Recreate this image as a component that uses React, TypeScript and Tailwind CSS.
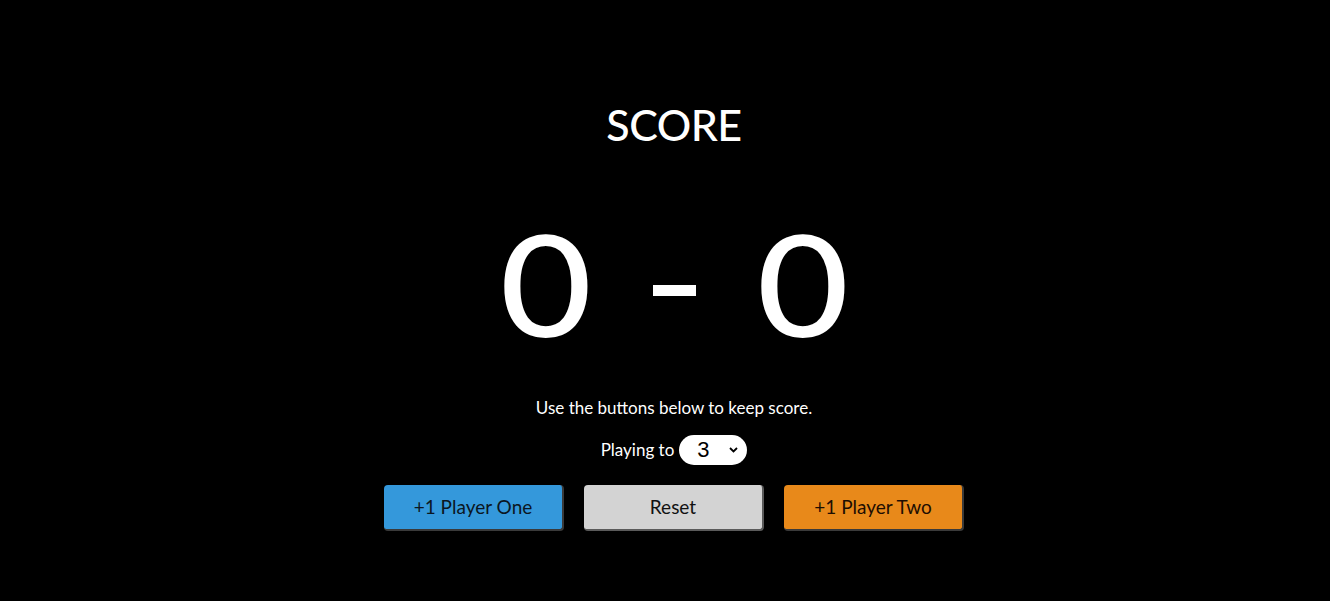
import { useState } from 'react';

export default function App() {
  const [p1, setP1] = useState(0);
  const [p2, setP2] = useState(0);
  const [target, setTarget] = useState(3);

  const done = p1 >= target || p2 >= target;

  return (
    <div className="min-h-screen bg-black text-white flex flex-col items-center pl-[18px] font-['Lato','Open_Sans',sans-serif]">
      <h1 className="mt-[99px] text-[43px] leading-[52px] font-medium tracking-[-0.5px]">SCORE</h1>

      <div className="mt-[60px] flex items-center text-[142px] leading-none font-medium">
        <span className="w-[90px] text-center scale-x-[1.12]">{p1}</span>
        <span className="mx-[62px] block w-[43px] h-[11px] bg-white mt-[16px]" />
        <span className="w-[90px] text-center scale-x-[1.12]">{p2}</span>
      </div>

      <p className="mt-[43px] text-[17px] leading-6">Use the buttons below to keep score.</p>

      <div className="mt-[15px] flex items-center gap-[5px] text-[17px]">
        <span>Playing to</span>
        <div className="relative">
          <select
            value={target}
            onChange={(e) => setTarget(Number(e.target.value))}
            className="appearance-none w-[68px] h-[30px] rounded-full bg-white text-black text-[22px] leading-none pl-[18px] font-['Liberation_Sans',sans-serif] outline-none"
          >
            {[3, 4, 5, 6, 7, 8, 9, 10].map((n) => (
              <option key={n} value={n}>{n}</option>
            ))}
          </select>
          <svg className="absolute right-[9px] top-[12px] pointer-events-none" width="9" height="6" viewBox="0 0 9 6">
            <path d="M1 1l3.5 3.5L8 1" fill="none" stroke="#000" strokeWidth="1.8" />
          </svg>
        </div>
      </div>

      <div className="mt-[20px] flex gap-[20px]">
        <button
          onClick={() => !done && setP1(p1 + 1)}
          className="w-[180px] h-[46px] rounded-[4px] bg-[#3498db] text-[#0b1622] text-[19px] border-r-2 border-b-2 border-[#3a3a3a]"
        >
          +1 Player One
        </button>
        <button
          onClick={() => { setP1(0); setP2(0); }}
          className="w-[180px] h-[46px] rounded-[4px] bg-[#d3d3d3] text-[#111] text-[19px] border-r-2 border-b-2 border-[#5a5a5a]"
        >
          Reset
        </button>
        <button
          onClick={() => !done && setP2(p2 + 1)}
          className="w-[180px] h-[46px] rounded-[4px] bg-[#e8891a] text-[#1e0e02] text-[19px] border-r-2 border-b-2 border-[#3a3a3a]"
        >
          +1 Player Two
        </button>
      </div>
    </div>
  );
}
